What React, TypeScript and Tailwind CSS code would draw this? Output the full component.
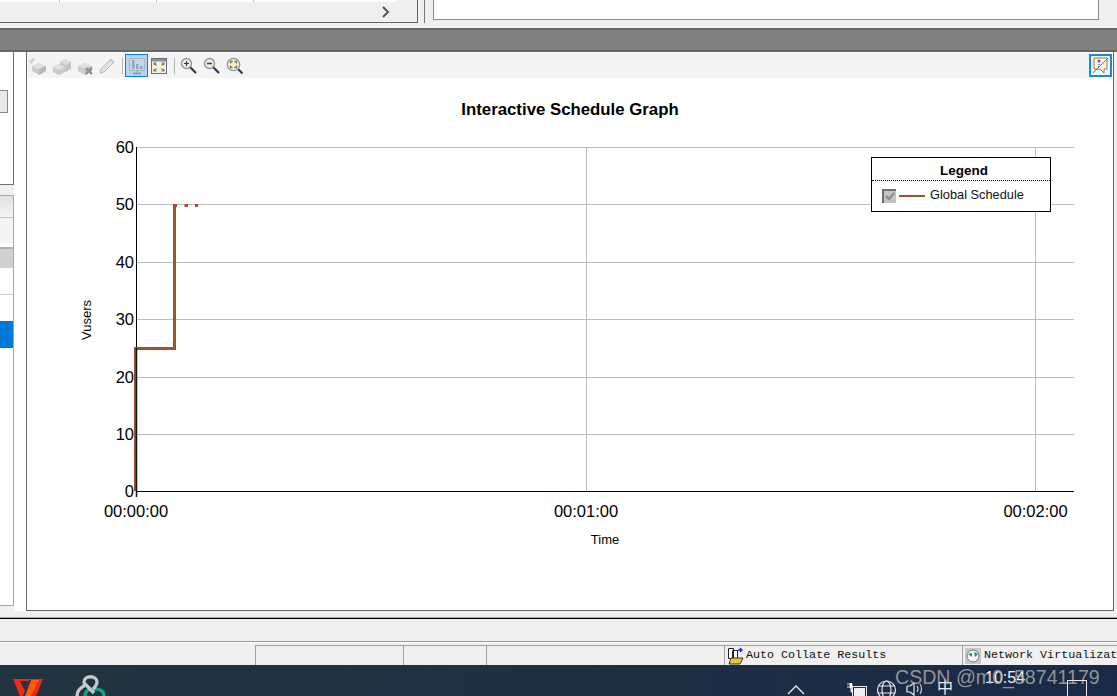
import React from "react";

const ticksY = [
  { v: "60", y: 147.5 },
  { v: "50", y: 204.5 },
  { v: "40", y: 262.5 },
  { v: "30", y: 319.5 },
  { v: "20", y: 377.5 },
  { v: "10", y: 434.5 },
];

function Brick({ variant }: { variant: number }) {
  return (
    <svg width="20" height="18" viewBox="0 0 20 18">
      {variant === 1 && <path d="M3 1l1 3M0 4l4 0M6 1L4 4M1 7l3-3" stroke="#cfcfcf" strokeWidth="1.300" />}
      {variant === 2 && (
        <>
          <path d="M8 5l5-3 6 3v7l-5 3-6-3z" fill="#c4c4c4" />
          <path d="M8 5l5-3 6 3-5 3z" fill="#dcdcdc" />
        </>
      )}
      <path d={variant === 2 ? "M1 10l6-3 6 3v5l-6 3-6-3z" : "M3 9l7-3 7 3v5l-7 4-7-4z"} fill="#cbcbcb" />
      <path d={variant === 2 ? "M1 10l6-3 6 3-6 3z" : "M3 9l7-3 7 3-7 3z"} fill="#e0e0e0" />
      {variant !== 2 && <path d="M10 12v6l7-4V9z" fill="#b8b8b8" />}
      {variant === 3 && <path d="M11 11l6 6M17 11l-6 6" stroke="#8f8f8f" strokeWidth="2.200" />}
    </svg>
  );
}

function Magnifier({ kind }: { kind: "plus" | "minus" | "fit" }) {
  const r = kind === "fit" ? 6.2 : 5;
  const c = kind === "fit" ? 7.5 : 6.5;
  return (
    <svg width="17" height="17" viewBox="0 0 17 17">
      <path d={kind === "fit" ? "M12 12l4.500 4.500" : "M10 10l6 6"} stroke="#2c3a50" strokeWidth="2.200" />
      <circle cx={c} cy={c} r={r} fill="#f3edd6" stroke="#8795a8" strokeWidth="1.300" />
      {kind === "plus" && <path d="M4 6.500h5M6.500 4v5" stroke="#3a3a3a" strokeWidth="1.200" />}
      {kind === "minus" && <path d="M4 6.500h5" stroke="#3a3a3a" strokeWidth="1.500" />}
      {kind === "fit" && (
        <path d="M4.500 6.500v-2h2M10.500 6.500v-2h-2M4.500 8.500v2h2M10.500 8.500v2h-2" fill="none" stroke="#8a6d2a" strokeWidth="1.300" />
      )}
    </svg>
  );
}

function Toolbar() {
  return (
    <div className="h-[25px] bg-[#f4f4f4] flex items-center">
      <div className="w-[23px] flex justify-center"><Brick variant={1} /></div>
      <div className="w-[23px] flex justify-center"><Brick variant={2} /></div>
      <div className="w-[23px] flex justify-center"><Brick variant={3} /></div>
      <div className="w-[23px] flex justify-center">
        <svg width="17" height="17" viewBox="0 0 17 17">
          <path d="M2 12L12 2l3 3-10 10-4 1z" fill="#e2e2e2" stroke="#bcbcbc" />
          <path d="M11 3l3 3" stroke="#bcbcbc" />
        </svg>
      </div>
      <div className="w-px h-[16px] bg-[#b5b5b5] ml-[3px] mr-[2px]" />
      <div className="w-[23px] h-[23px] border border-[#0f7ed6] bg-[#b5d6f2] flex items-center justify-center">
        <svg width="18" height="18" viewBox="0 0 18 18">
          <path d="M1.500 1.500h15v12h-15z" fill="#c6d8e8" stroke="#a3b6c7" />
          <path d="M4 12V3h2.500v9zM8 12V7h2.500v5zM12 12V9h2.500v3z" fill="#93a7ba" />
          <path d="M5 16.500h8" stroke="#8498aa" strokeWidth="1.600" />
          <path d="M8 14h2v2H8z" fill="#9fb2c3" />
        </svg>
      </div>
      <div className="w-[21px] flex justify-center">
        <svg width="16" height="16" viewBox="0 0 16 16">
          <rect x="0.500" y="0.500" width="15" height="15" fill="#f1efe6" stroke="#5f6f85" />
          <path d="M1 1h14v2.500H1z" fill="#8492a6" />
          <path d="M3 7V5h2.500M13 7V5h-2.500M3 11v2h2.500M13 11v2h-2.500M3.500 5.500l2 2M12.500 5.500l-2 2M3.500 12.500l2-2M12.500 12.500l-2-2" stroke="#9a7d3a" fill="none" strokeWidth="1.100" />
        </svg>
      </div>
      <div className="w-px h-[16px] bg-[#b5b5b5] ml-[5px] mr-[2px]" />
      <div className="w-[23px] flex justify-center"><Magnifier kind="plus" /></div>
      <div className="w-[23px] flex justify-center"><Magnifier kind="minus" /></div>
      <div className="w-[23px] flex justify-center"><Magnifier kind="fit" /></div>
      <div className="ml-auto mr-[1px] w-[23px] h-[23px] border-2 border-[#1a86dc] bg-[#eef3f8] flex items-center justify-center">
        <svg width="17" height="17" viewBox="0 0 17 17">
          <path d="M2 1h13v11h-3v4l-4-4H2z" fill="#fbf6e4" stroke="#9a7d3a" />
          <circle cx="7" cy="4" r="1.500" fill="#5a5ac0" />
          <path d="M7 7v4" stroke="#5a5ac0" strokeWidth="1.500" strokeDasharray="1 1" />
          <path d="M1 16L16 1" stroke="#e04050" />
        </svg>
      </div>
    </div>
  );
}

function Chart() {
  return (
    <svg width="1085" height="531" viewBox="27 78 1085 531" className="block">
      <text x="570" y="115" textAnchor="middle" fontSize="16.800" fontWeight="700" fill="#000">Interactive Schedule Graph</text>
      {ticksY.map((t) => (
        <g key={t.v}>
          <line x1="137" x2="1074" y1={t.y} y2={t.y} stroke="#bdbdbd" />
          <text x="134" y={t.y + 5.5} textAnchor="end" fontSize="16.500" fill="#000">{t.v}</text>
        </g>
      ))}
      <text x="134" y="497" textAnchor="end" fontSize="16.500" fill="#000">0</text>
      <line x1="586.500" x2="586.500" y1="147" y2="491" stroke="#bdbdbd" />
      <line x1="1035.500" x2="1035.500" y1="147" y2="491" stroke="#bdbdbd" />
      <line x1="136.500" x2="136.500" y1="147" y2="497" stroke="#000" />
      <line x1="136" x2="1074" y1="491.500" y2="491.500" stroke="#000" />
      <path d="M135.500 491V348.500H174.500V204" fill="none" stroke="#a0522d" strokeWidth="3" />
      <path d="M136.500 348V497" stroke="#111" strokeWidth="1.500" />
      <rect x="174" y="204" width="3" height="3" fill="#a0522d" />
      <rect x="184.500" y="204" width="3.500" height="3" fill="#a0522d" />
      <rect x="195" y="204" width="3" height="3" fill="#a0522d" />
      <text x="136" y="517" textAnchor="middle" fontSize="16.500" fill="#000">00:00:00</text>
      <text x="586" y="517" textAnchor="middle" fontSize="16.500" fill="#000">00:01:00</text>
      <text x="1035.500" y="517" textAnchor="middle" fontSize="16.500" fill="#000">00:02:00</text>
      <text x="605" y="544" textAnchor="middle" fontSize="13" fill="#000">Time</text>
      <text transform="translate(91 340) rotate(-90)" fontSize="13" fill="#000">Vusers</text>
    </svg>
  );
}

function Legend() {
  return (
    <div className="absolute left-[844px] top-[105px] w-[180px] h-[55px] border border-black bg-white">
      <div className="h-[23px] border-b border-dotted border-black flex items-center justify-center text-[13.500px] font-bold text-black leading-none pt-[3px] pl-[6px]">Legend</div>
      <div className="h-[29px] flex items-center pl-[10px]">
        <div className="w-[14px] h-[14px] bg-[#c4c4c4] border-l-2 border-t-2 border-[#6f6f6f] flex items-center justify-center">
          <svg width="11" height="11" viewBox="0 0 11 11"><path d="M1 5l3 3 5-6" fill="none" stroke="#8a8a8a" strokeWidth="2" /></svg>
        </div>
        <div className="w-[26px] h-[2px] bg-[#a0522d] ml-[3px]" />
        <span className="ml-[5px] text-[12.800px] text-[#111] leading-none">Global Schedule</span>
      </div>
    </div>
  );
}

function LeftPanel() {
  return (
    <div className="w-[14px] h-[554px] flex flex-col">
      <div className="h-[133px] border-r border-b border-[#6e6e6e] bg-white pt-[38px]">
        <div className="h-[23px] w-[8px] bg-[#e8e8e8] border border-l-0 border-[#8a8a8a]" />
      </div>
      <div className="h-[10px]" />
      <div className="flex-1 border-t border-r border-b border-[#a8a8a8] bg-white flex flex-col">
        <div className="h-[22px] bg-gradient-to-b from-[#e0e0e0] to-[#f4f4f4] border-b border-[#c0c0c0]" />
        <div className="h-[25px] bg-[#f4f4f4]" />
        <div className="h-[4px] bg-white" />
        <div className="h-[2px] bg-[#b0b0b0]" />
        <div className="h-[19px] bg-[#d0d0d0]" />
        <div className="h-[27px] bg-white border-b border-[#c8c8c8]" />
        <div className="h-[26px] bg-white" />
        <div className="h-[27px] bg-[#0078d7]" />
      </div>
    </div>
  );
}

function StatusCell({ w, children }: { w: string; children?: React.ReactNode }) {
  return (
    <div className={`${w} h-[20px] border-l border-t border-[#a0a0a0] flex items-center overflow-hidden whitespace-nowrap`}>
      {children}
    </div>
  );
}

export default function App() {
  return (
    <div className="w-[1117px] h-[696px] overflow-hidden bg-[#f0f0f0] flex flex-col font-['Liberation_Sans',sans-serif] relative">
      {/* top strip */}
      <div className="h-[28px] flex">
        <div className="w-[418px] h-[23px] border-r border-b border-[#666] bg-[#efefef] relative">
          <div className="h-[2px] w-[396px] bg-white flex">
            <div className="w-[60px] border-r border-[#bbb]" />
            <div className="w-[97px] border-r border-[#bbb]" />
            <div className="w-[97px] border-r border-[#bbb]" />
          </div>
          <svg width="10" height="12" viewBox="0 0 10 12" className="absolute left-[381px] top-[6px]">
            <path d="M2 1l5 5-5 5" fill="none" stroke="#555" strokeWidth="2" />
          </svg>
        </div>
        <div className="w-[6px]" />
        <div className="w-px h-[23px] bg-[#777]" />
        <div className="w-[8px]" />
        <div className="w-[666px] h-[20px] border-l border-r border-b border-[#888] bg-white" />
      </div>
      {/* splitter */}
      <div className="h-[24px] bg-[#808080] border-t-2 border-b-2 border-[#666]" />
      {/* main */}
      <div className="h-[559px] flex">
        <LeftPanel />
        <div className="w-[12px] bg-white" />
        <div className="flex-1 border-l border-r border-b border-[#666] bg-white relative mr-[3px] pt-[1px]">
          <Toolbar />
          <Chart />
          <Legend />
        </div>
      </div>
      <div className="h-[8px] border-b border-black">
        <div className="h-[6px]" />
        <div className="h-px bg-[#a8a8a8]" />
      </div>
      {/* empty band */}
      <div className="h-[23px] bg-[#efefef] border-b border-[#999]" />
      {/* status */}
      <div className="h-[23px] pt-[2px] flex bg-[#f0f0f0] border-t border-white">
        <div className="w-[255px]" />
        <StatusCell w="w-[148px]" />
        <StatusCell w="w-[83px]" />
        <StatusCell w="w-[238px]" />
        <StatusCell w="w-[238px]">
          <svg width="20" height="18" viewBox="0 0 20 18" className="ml-[1px] shrink-0">
            <path d="M2.500 1.500h5v10h-5zM6.500 3.500h5v10h-5z" fill="#fff" stroke="#222" />
            <path d="M12 3h4M14 1l2 2-2 2" stroke="#2222cc" fill="none" strokeWidth="1.300" />
            <path d="M3 17l2-6h12l-3 6z" fill="#e8c830" stroke="#333" />
          </svg>
          <span className="ml-[0px] text-[11.700px] font-['Liberation_Mono',monospace] text-[#111]">Auto Collate Results</span>
        </StatusCell>
        <StatusCell w="w-[155px]">
          <div className="w-[16px] h-[16px] bg-[#c8c8c8] ml-[2px] shrink-0 flex items-center justify-center">
            <svg width="14" height="14" viewBox="0 0 14 14">
              <circle cx="7" cy="7" r="6" fill="#f4f4f4" stroke="#777" />
              <path d="M2 5l4-1 0 4zM8 3l4 2-3 3z" fill="#1a8a8a" />
            </svg>
          </div>
          <span className="ml-[3px] text-[11.700px] font-['Liberation_Mono',monospace] text-[#111]">Network Virtualizat</span>
        </StatusCell>
      </div>
      {/* taskbar */}
      <div className="h-[31px] bg-gradient-to-r from-[#21343f] to-[#1b2a46] relative overflow-hidden">
        <svg width="32" height="31" viewBox="0 0 32 31" className="absolute left-[12px] top-0">
          <path d="M1 14h30l-7 17H8z" fill="#ee2a14" />
          <path d="M8 16h8l-3 10z" fill="#21343f" />
          <path d="M19 15h8l-8 16h-6z" fill="#ff5a10" />
          <path d="M17 15h2l-6 16h-2z" fill="#21343f" />
        </svg>
        <svg width="32" height="31" viewBox="0 0 32 31" className="absolute left-[74px] top-0">
          <path d="M11 31c0-5 5-8 9-6 3-2 10 0 10 6" fill="none" stroke="#10a483" strokeWidth="3.300" />
          <path d="M3 31c0-6 4-8 8-11l-1-3c0-7 13-7 13 0 0 3-2 5-4 7" fill="none" stroke="#c4c8ca" strokeWidth="3.300" />
          <path d="M11 19l9 9" fill="none" stroke="#c4c8ca" strokeWidth="3.300" />
        </svg>
        <svg width="18" height="10" viewBox="0 0 18 10" className="absolute left-[787px] top-[20px]">
          <path d="M1 9l8-8 8 8" fill="none" stroke="#e8e8e8" strokeWidth="1.300" />
        </svg>
        <svg width="22" height="13" viewBox="0 0 22 13" className="absolute left-[846px] top-[18px]">
          <rect x="6.500" y="3.500" width="14" height="10" fill="none" stroke="#e8e8e8" />
          <rect x="8" y="5" width="11" height="8" fill="#f0f0f0" />
          <path d="M1 1h3M1 4h3M4 0h2v5H4zM5 5v4h2" fill="#fff" stroke="#fff" strokeWidth="0.800" />
        </svg>
        <svg width="22" height="16" viewBox="0 0 22 16" className="absolute left-[875px] top-[15px]">
          <g fill="none" stroke="#e8e8e8" strokeWidth="1.200">
            <circle cx="11.500" cy="10" r="9" />
            <ellipse cx="11.500" cy="10" rx="4.500" ry="9" />
            <path d="M3 6h17M3 13h17" />
          </g>
        </svg>
        <svg width="22" height="14" viewBox="0 0 22 14" className="absolute left-[905px] top-[17px]">
          <path d="M2 4h3l4-3v13M2 4v6h3l4 3" fill="none" stroke="#e8e8e8" strokeWidth="1.200" />
          <path d="M12 4q2 3 0 6M15 2q3 5 0 10" fill="none" stroke="#cccccc" strokeWidth="1.200" />
        </svg>
        <span className="absolute left-[937px] top-[11px] text-[16px] leading-[20px] text-[#f0f0f0] font-['Noto_Sans_CJK_SC',sans-serif]">中</span>
        <span className="absolute left-[985px] top-[3px] text-[16px] leading-[20px] text-[#f4f4f4]">10:54</span>
        <span className="absolute left-[895px] top-0 text-[19.600px] leading-[24px] text-[#b0b0b0]/80">CSDN @m0_58741179</span>
        <div className="absolute left-[1067px] top-[15px] w-[20px] h-[20px] border border-[#e8e8e8]" />
      </div>
    </div>
  );
}
